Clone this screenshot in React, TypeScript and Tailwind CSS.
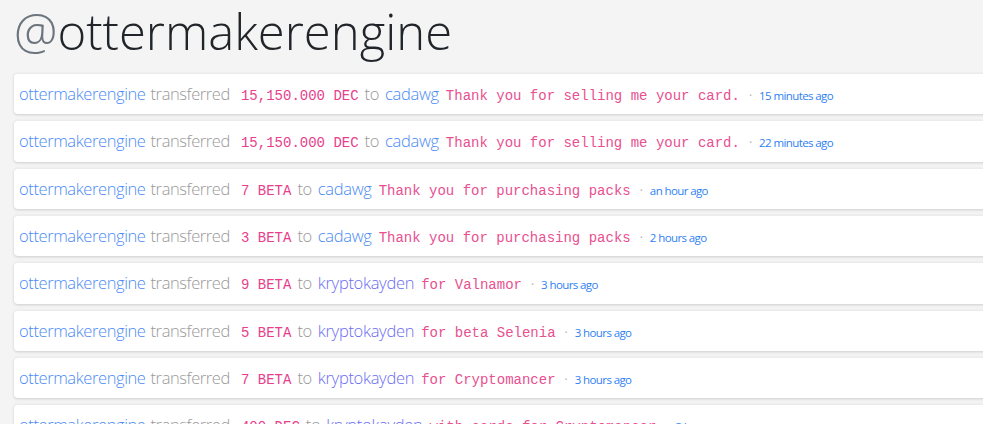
import React from "react";

type Row = {
  amount: string;
  to: string;
  visited?: boolean;
  memo: string;
  time: string;
};

const rows: Row[] = [
  { amount: "15,150.000 DEC", to: "cadawg", memo: "Thank you for selling me your card.", time: "15 minutes ago" },
  { amount: "15,150.000 DEC", to: "cadawg", memo: "Thank you for selling me your card.", time: "22 minutes ago" },
  { amount: "7 BETA", to: "cadawg", memo: "Thank you for purchasing packs", time: "an hour ago" },
  { amount: "3 BETA", to: "cadawg", memo: "Thank you for purchasing packs", time: "2 hours ago" },
  { amount: "9 BETA", to: "kryptokayden", visited: true, memo: "for Valnamor", time: "3 hours ago" },
  { amount: "5 BETA", to: "kryptokayden", visited: true, memo: "for beta Selenia", time: "3 hours ago" },
  { amount: "7 BETA", to: "kryptokayden", visited: true, memo: "for Cryptomancer", time: "3 hours ago" },
  { amount: "400 DEC", to: "kryptokayden", visited: true, memo: "with cards for Cryptomancer", time: "3 hours ago" },
];

export default function App() {
  return (
    <div className="w-[983px] h-[424px] overflow-hidden bg-[#f4f4f4] font-['Open_Sans',sans-serif]">
      <h1 className="pl-[14px] text-[49px] leading-[62px] font-light text-[#212529] whitespace-nowrap">
        <span className="text-[#6c757d]">@</span>ottermakerengine
      </h1>
      <div className="pl-[14px] pt-[11px] w-[1100px]">
        {rows.map((r, i) => (
          <div
            key={i}
            className="h-[41.33px] mb-[6px] bg-white rounded-[4px] border-t border-[#ececec] shadow-[0_1px_3px_rgba(0,0,0,0.16)] flex items-baseline pl-[5px] pt-[8px] whitespace-nowrap"
          >
            <span className="text-[16.5px] font-light text-[#4a8af4] tracking-[-0.4px]">ottermakerengine</span>
            <span className="text-[16.5px] font-light text-[#999999] tracking-[-0.4px] ml-[5px]">transferred</span>
            <span className="font-['Liberation_Mono',monospace] text-[14px] text-[#e83e8c] ml-[11px]">{r.amount}</span>
            <span className="text-[16.5px] font-light text-[#999999] tracking-[-0.4px] ml-[6px]">to</span>
            <span
              className={
                "text-[16.5px] font-light tracking-[-0.3px] ml-[6px] " +
                (r.visited ? "text-[#6a6cf2]" : "text-[#4a8af4]")
              }
            >
              {r.to}
            </span>
            <span className="font-['Liberation_Mono',monospace] text-[14px] text-[#e8508f] ml-[7px]">{r.memo}</span>
            <span className="text-[12px] text-[#b0b0b0] ml-[9px]">·</span>
            <span className="text-[11.5px] text-[#2f7ff5] tracking-[-0.6px] ml-[7px]">{r.time}</span>
          </div>
        ))}
      </div>
    </div>
  );
}
